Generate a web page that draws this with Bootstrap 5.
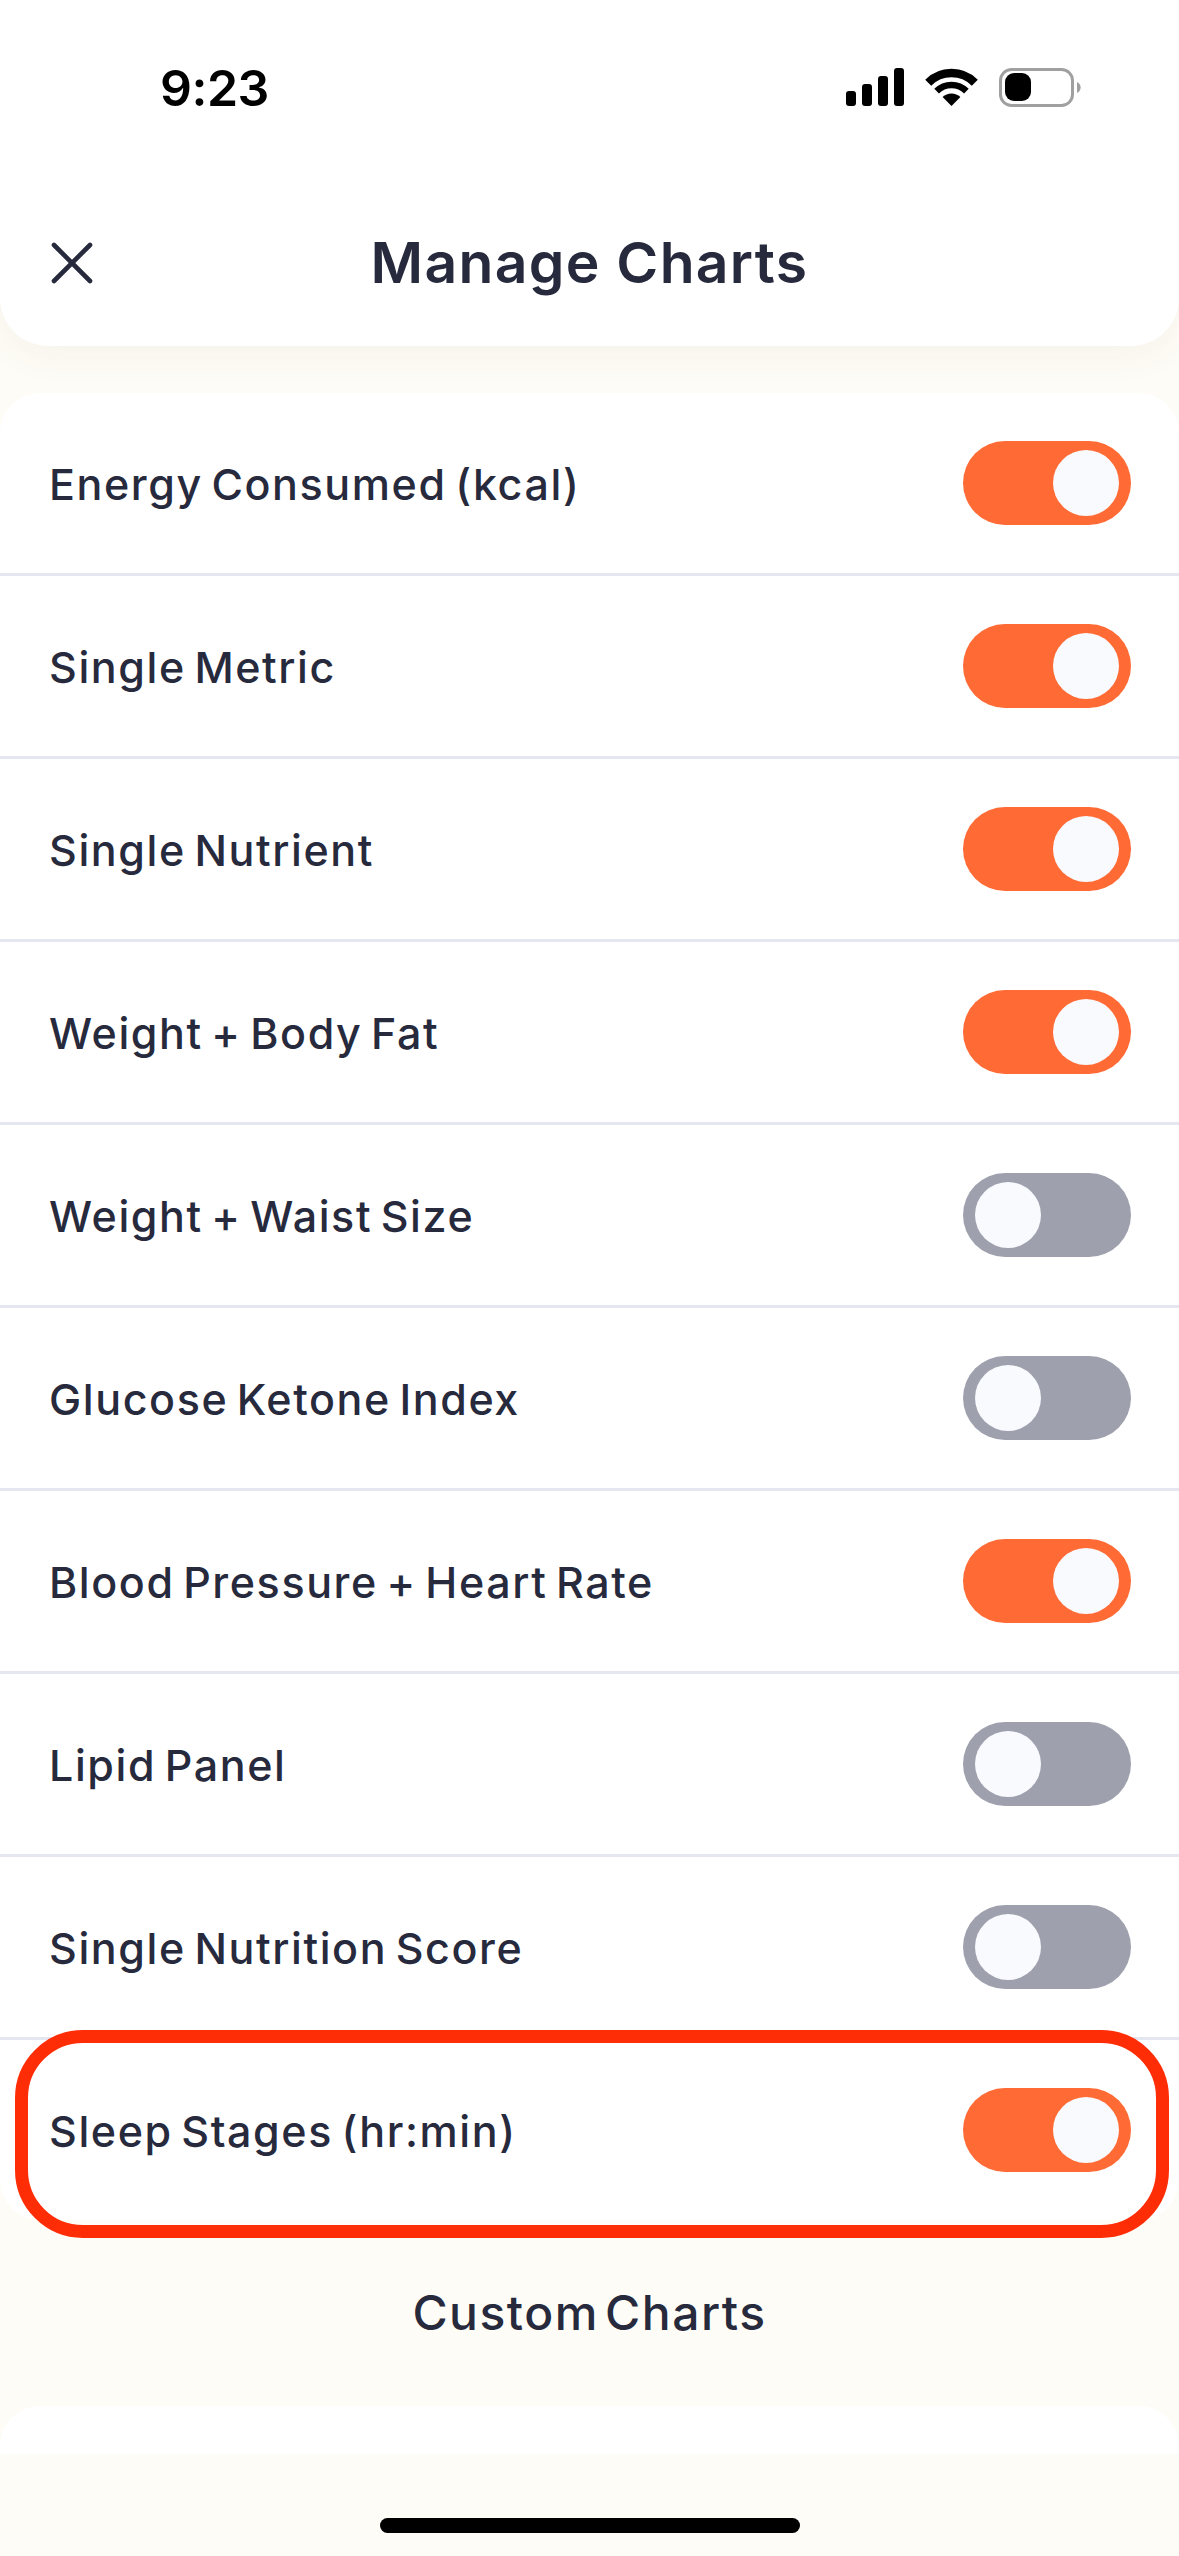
<!doctype html>
<html lang="en">
<head>
<meta charset="utf-8">
<title>Manage Charts</title>
<link href="https://cdn.jsdelivr.net/npm/bootstrap@5.3.0/dist/css/bootstrap.min.css" rel="stylesheet">
<style>
html,body{height:2556px;overflow:hidden}
body{background:#fefcf6;font-family:Inter,"Noto Sans",sans-serif;color:#272a3d;width:1179px}
.hdr{height:346px;background:#fff;border-radius:0 0 48px 48px;box-shadow:0 10px 36px rgba(90,70,30,.05);position:relative;z-index:1}
.status-row{height:221px;padding:62px 97px 0 160px}
.clock{font-family:Inter,sans-serif;font-weight:600;font-size:50px;line-height:52px;color:#000;letter-spacing:-.5px}
.title-row{padding:0 51px;height:84px;grid-template-columns:1fr auto 1fr}
.title-txt{font-family:Inter,sans-serif;font-weight:600;font-size:57px;line-height:84px;margin:0;color:#272a3d;letter-spacing:1.3px}
.chart-list{margin-top:47px;--bs-list-group-border-width:0;--bs-list-group-border-radius:40px;--bs-list-group-bg:#fff}
.chart-row{height:183px;padding:0 48px 0 49px;border-bottom:3px solid #e4e6f0!important;font-size:43px;font-weight:500;color:#272a3d;letter-spacing:1.6px;word-spacing:-4.5px}
.row-label{margin-top:3px}
.chart-row.last-row{height:180px;border-bottom:0!important;position:relative}
.tog{width:168px;height:84px;border-radius:42px;padding:0 12px}
.tog-on{background:#ff6a35;justify-content:flex-end}
.tog-off{background:#9ea1ad;justify-content:flex-start}
.knob{width:66px;height:66px;border-radius:50%;background:#f9fafe}
.ring{position:absolute;left:15px;right:10px;top:-10px;bottom:-18px;border:13px solid #ff2d06;border-radius:68px;pointer-events:none}
.sect-title{height:186px;font-size:48px;font-weight:500;color:#272a3d;margin:0;letter-spacing:1.5px;word-spacing:-8px}
.next-card{height:48px;background:#fff;border-radius:40px 40px 0 0}
.home-strip{height:102px;padding-top:64px}
.home-bar{width:420px;height:15px;border-radius:8px;background:#000}
</style>
</head>
<body>
<header class="hdr">
  <div class="status-row d-flex justify-content-between">
    <span class="clock">9:23</span>
    <svg width="236" height="42" viewBox="0 0 236 42" aria-hidden="true" class="flex-shrink-0" style="margin-top:6px">
      <rect x="0" y="23" width="10" height="15" rx="3"/>
      <rect x="16" y="16" width="10" height="22" rx="3"/>
      <rect x="32" y="8" width="10" height="30" rx="3"/>
      <rect x="48" y="0" width="10" height="38" rx="3"/>
      <g transform="translate(0,-1)">
      <path d="M82.2 15.7a33 33 0 0 1 46.6 0" fill="none" stroke="#000" stroke-width="8.5"/>
      <path d="M90.6 24.1a21 21 0 0 1 29.8 0" fill="none" stroke="#000" stroke-width="6.5"/>
      <path d="M105.5 39 96.6 30.1a12.6 12.6 0 0 1 17.8 0z"/>
      </g>
      <rect x="154.5" y="1.5" width="72" height="36" rx="11" fill="none" stroke="#a0a0a0" stroke-width="3"/>
      <rect x="159" y="5" width="26" height="28" rx="9"/>
      <path d="M231 14a6 6 0 0 1 0 11z" fill="#a0a0a0"/>
    </svg>
  </div>
  <div class="title-row d-grid align-items-center">
    <svg width="42" height="42" viewBox="0 0 42 42" aria-hidden="true"><path d="M3 3 39 39M39 3 3 39" fill="none" stroke="#272a3d" stroke-width="4.6" stroke-linecap="round"/></svg>
    <h1 class="title-txt">Manage Charts</h1>
    <span></span>
  </div>
</header>
<main>
  <ul class="list-group chart-list">
    <li class="list-group-item chart-row d-flex justify-content-between align-items-center"><span class="row-label">Energy Consumed (kcal)</span><span class="tog tog-on d-flex align-items-center"><span class="knob"></span></span></li>
    <li class="list-group-item chart-row d-flex justify-content-between align-items-center"><span class="row-label">Single Metric</span><span class="tog tog-on d-flex align-items-center"><span class="knob"></span></span></li>
    <li class="list-group-item chart-row d-flex justify-content-between align-items-center"><span class="row-label">Single Nutrient</span><span class="tog tog-on d-flex align-items-center"><span class="knob"></span></span></li>
    <li class="list-group-item chart-row d-flex justify-content-between align-items-center"><span class="row-label">Weight + Body Fat</span><span class="tog tog-on d-flex align-items-center"><span class="knob"></span></span></li>
    <li class="list-group-item chart-row d-flex justify-content-between align-items-center"><span class="row-label">Weight + Waist Size</span><span class="tog tog-off d-flex align-items-center"><span class="knob"></span></span></li>
    <li class="list-group-item chart-row d-flex justify-content-between align-items-center"><span class="row-label">Glucose Ketone Index</span><span class="tog tog-off d-flex align-items-center"><span class="knob"></span></span></li>
    <li class="list-group-item chart-row d-flex justify-content-between align-items-center"><span class="row-label">Blood Pressure + Heart Rate</span><span class="tog tog-on d-flex align-items-center"><span class="knob"></span></span></li>
    <li class="list-group-item chart-row d-flex justify-content-between align-items-center"><span class="row-label">Lipid Panel</span><span class="tog tog-off d-flex align-items-center"><span class="knob"></span></span></li>
    <li class="list-group-item chart-row d-flex justify-content-between align-items-center"><span class="row-label">Single Nutrition Score</span><span class="tog tog-off d-flex align-items-center"><span class="knob"></span></span></li>
    <li class="list-group-item chart-row last-row d-flex justify-content-between align-items-center"><span class="row-label">Sleep Stages (hr:min)</span><span class="tog tog-on d-flex align-items-center"><span class="knob"></span></span><span class="ring"></span></li>
  </ul>
  <h2 class="sect-title d-flex align-items-center justify-content-center">Custom Charts</h2>
  <div class="next-card"></div>
  <div class="home-strip d-flex justify-content-center"><div class="home-bar"></div></div>
</main>
<script src="https://cdn.jsdelivr.net/npm/bootstrap@5.3.0/dist/js/bootstrap.bundle.min.js"></script>
</body>
</html>
